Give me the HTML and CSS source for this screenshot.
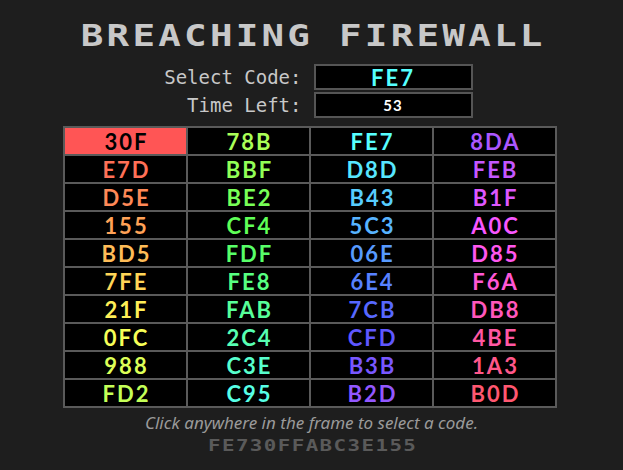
FILE: index.html
```html
<!DOCTYPE html>
<html>
<head>
<meta charset="utf-8">
<link rel="stylesheet" href="styles.css">
</head>
<body>
<div class="frame">
  <h1 class="title">BREACHING FIREWALL</h1>
  <div class="info">
    <div class="info-row">
      <span class="label">Select Code:</span>
      <span class="box code">FE7</span>
    </div>
    <div class="info-row">
      <span class="label">Time Left:</span>
      <span class="box time">53</span>
    </div>
  </div>
  <div class="grid">
    <div class="cell selected">30F</div>
    <div class="cell" style="color:hsl(90,100%,67%)">78B</div>
    <div class="cell" style="color:hsl(180,100%,67%)">FE7</div>
    <div class="cell" style="color:hsl(270,100%,67%)">8DA</div>

    <div class="cell" style="color:hsl(9,100%,67%)">E7D</div>
    <div class="cell" style="color:hsl(99,100%,67%)">BBF</div>
    <div class="cell" style="color:hsl(189,100%,67%)">D8D</div>
    <div class="cell" style="color:hsl(279,100%,67%)">FEB</div>

    <div class="cell" style="color:hsl(18,100%,67%)">D5E</div>
    <div class="cell" style="color:hsl(108,100%,67%)">BE2</div>
    <div class="cell" style="color:hsl(198,100%,67%)">B43</div>
    <div class="cell" style="color:hsl(288,100%,67%)">B1F</div>

    <div class="cell" style="color:hsl(27,100%,67%)">155</div>
    <div class="cell" style="color:hsl(117,100%,67%)">CF4</div>
    <div class="cell" style="color:hsl(207,100%,67%)">5C3</div>
    <div class="cell" style="color:hsl(297,100%,67%)">A0C</div>

    <div class="cell" style="color:hsl(36,100%,67%)">BD5</div>
    <div class="cell" style="color:hsl(126,100%,67%)">FDF</div>
    <div class="cell" style="color:hsl(216,100%,67%)">06E</div>
    <div class="cell" style="color:hsl(306,100%,67%)">D85</div>

    <div class="cell" style="color:hsl(45,100%,67%)">7FE</div>
    <div class="cell" style="color:hsl(135,100%,67%)">FE8</div>
    <div class="cell" style="color:hsl(225,100%,67%)">6E4</div>
    <div class="cell" style="color:hsl(315,100%,67%)">F6A</div>

    <div class="cell" style="color:hsl(54,100%,67%)">21F</div>
    <div class="cell" style="color:hsl(144,100%,67%)">FAB</div>
    <div class="cell" style="color:hsl(234,100%,67%)">7CB</div>
    <div class="cell" style="color:hsl(324,100%,67%)">DB8</div>

    <div class="cell" style="color:hsl(63,100%,67%)">0FC</div>
    <div class="cell" style="color:hsl(153,100%,67%)">2C4</div>
    <div class="cell" style="color:hsl(243,100%,67%)">CFD</div>
    <div class="cell" style="color:hsl(333,100%,67%)">4BE</div>

    <div class="cell" style="color:hsl(72,100%,67%)">988</div>
    <div class="cell" style="color:hsl(162,100%,67%)">C3E</div>
    <div class="cell" style="color:hsl(252,100%,67%)">B3B</div>
    <div class="cell" style="color:hsl(342,100%,67%)">1A3</div>

    <div class="cell" style="color:hsl(81,100%,67%)">FD2</div>
    <div class="cell" style="color:hsl(171,100%,67%)">C95</div>
    <div class="cell" style="color:hsl(261,100%,67%)">B2D</div>
    <div class="cell" style="color:hsl(351,100%,67%)">B0D</div>
  </div>
  <p class="hint">Click anywhere in the frame to select a code.</p>
  <p class="sequence">FE730FFABC3E155</p>
</div>
</body>
</html>
```

FILE: styles.css
```css
html, body {
  margin: 0;
  padding: 0;
  background: #1e1e1e;
}

.frame {
  width: 623px;
  height: 470px;
  display: flex;
  flex-direction: column;
  align-items: center;
  box-sizing: border-box;
  padding-top: 21px;
}

.title {
  margin: 0;
  font-family: "DejaVu Sans Mono", monospace;
  font-weight: bold;
  font-size: 30px;
  line-height: 30px;
  letter-spacing: 2.6px;
  color: #c8c8c8;
  padding-left: 2px;
  transform: scaleX(1.25);
}

.info {
  margin-top: 13px;
  display: flex;
  flex-direction: column;
  gap: 2px;
}

.info-row {
  display: flex;
  align-items: center;
  gap: 12px;
}

.label {
  width: 151px;
  text-align: right;
  font-family: "DejaVu Sans Mono", monospace;
  font-size: 19px;
  color: #c8c8c8;
}

.box {
  width: 159px;
  height: 26px;
  box-sizing: border-box;
  border: 2px solid #555555;
  background: #000;
  display: flex;
  align-items: center;
  justify-content: center;
  font-family: "Lato", sans-serif;
  font-weight: bold;
}

.code {
  color: #55ffff;
  font-size: 22px;
  letter-spacing: 2px;
}

.time {
  color: #ffffff;
  font-size: 15px;
  letter-spacing: 1px;
}

.grid {
  align-self: flex-start;
  margin-left: 63px;
  margin-top: 8px;
  width: 494px;
  box-sizing: border-box;
  display: grid;
  grid-template-columns: repeat(4, 1fr);
  grid-auto-rows: 26px;
  gap: 2px;
  padding: 2px;
  background: #5a5a5a;
}

.cell {
  background: #000;
  display: flex;
  align-items: center;
  justify-content: center;
  font-family: "Lato", sans-serif;
  font-weight: bold;
  font-size: 22px;
  letter-spacing: 2px;
  padding-left: 2px;
}

.cell.selected {
  background: #ff5555;
  color: #000;
}

.hint {
  margin: 5px 0 0;
  font-family: "Noto Sans", sans-serif;
  font-style: italic;
  font-size: 17px;
  line-height: 20px;
  color: #9a9a9a;
}

.sequence {
  margin: 5px 0 0;
  font-family: "DejaVu Sans Mono", monospace;
  font-weight: bold;
  font-size: 16px;
  line-height: 16px;
  letter-spacing: 1.1px;
  color: #5a5a5a;
  padding-left: 1px;
  transform: scaleX(1.3);
}
```
